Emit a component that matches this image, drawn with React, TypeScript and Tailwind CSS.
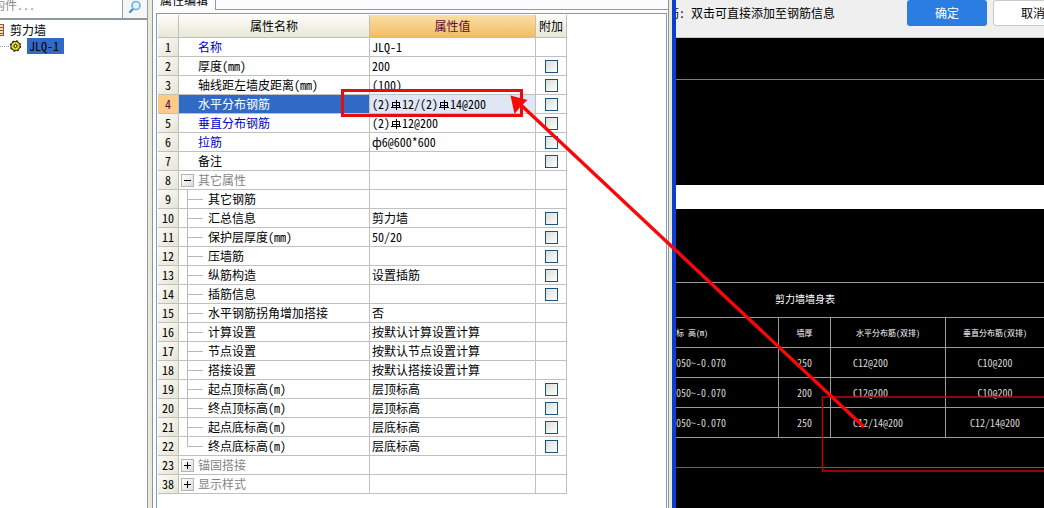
import { useState } from 'react';

type Row = {
  no: number;
  name: string;
  value?: string;
  kind?: 'group-open' | 'group-closed' | 'child' | 'last-child';
  link?: boolean;
  check?: boolean;
};

// '#' in a value stands for the grade III rebar symbol
const ROWS: Row[] = [
  { no: 1, name: '名称', value: 'JLQ-1', link: true },
  { no: 2, name: '厚度(mm)', value: '200', check: true },
  { no: 3, name: '轴线距左墙皮距离(mm)', value: '(100)', check: true },
  { no: 4, name: '水平分布钢筋', value: '(2)#12/(2)#14@200', link: true, check: true },
  { no: 5, name: '垂直分布钢筋', value: '(2)#12@200', link: true, check: true },
  { no: 6, name: '拉筋', value: 'ф6@600*600', link: true, check: true },
  { no: 7, name: '备注', check: true },
  { no: 8, name: '其它属性', kind: 'group-open' },
  { no: 9, name: '其它钢筋', kind: 'child' },
  { no: 10, name: '汇总信息', value: '剪力墙', kind: 'child', check: true },
  { no: 11, name: '保护层厚度(mm)', value: '50/20', kind: 'child', check: true },
  { no: 12, name: '压墙筋', kind: 'child', check: true },
  { no: 13, name: '纵筋构造', value: '设置插筋', kind: 'child', check: true },
  { no: 14, name: '插筋信息', kind: 'child', check: true },
  { no: 15, name: '水平钢筋拐角增加搭接', value: '否', kind: 'child' },
  { no: 16, name: '计算设置', value: '按默认计算设置计算', kind: 'child' },
  { no: 17, name: '节点设置', value: '按默认节点设置计算', kind: 'child' },
  { no: 18, name: '搭接设置', value: '按默认搭接设置计算', kind: 'child' },
  { no: 19, name: '起点顶标高(m)', value: '层顶标高', kind: 'child', check: true },
  { no: 20, name: '终点顶标高(m)', value: '层顶标高', kind: 'child', check: true },
  { no: 21, name: '起点底标高(m)', value: '层底标高', kind: 'child', check: true },
  { no: 22, name: '终点底标高(m)', value: '层底标高', kind: 'last-child', check: true },
  { no: 23, name: '锚固搭接', kind: 'group-closed' },
  { no: 38, name: '显示样式', kind: 'group-closed' },
];

const WALLS = [
  ['050~-0.070', '250', 'C12@200', 'C10@200'],
  ['050~-0.070', '200', 'C12@200', 'C10@200'],
  ['050~-0.070', '250', 'C12/14@200', 'C12/14@200'],
];

function RebarSymbol() {
  return (
    <svg viewBox="0 0 12 12" className="inline-block size-3 align-[-2px]" fill="none" stroke="#000" shapeRendering="crispEdges">
      <path d="M2.5 8.5v-5h7v5M2.500 6.500h7M1 8.500h10M6.500 1v10" />
    </svg>
  );
}

function Value({ text }: { text: string }) {
  const parts = text.split('#');
  return (
    <>
      {parts.map((part, i) => (
        <span key={i}>
          {i > 0 && <RebarSymbol />}
          {part}
        </span>
      ))}
    </>
  );
}

function NameCell({ row, selected }: { row: Row; selected: boolean }) {
  if (row.kind === 'group-open' || row.kind === 'group-closed') {
    return (
      <div className="flex h-[18px] items-center text-[#858585]">
        <button
          type="button"
          aria-label={row.name}
          className="mr-1 ml-0.5 flex size-[13px] items-center justify-center border border-[#b4b4b4] bg-linear-to-br from-white to-[#dcdcdc]"
        >
          <svg viewBox="0 0 9 9" className="size-[9px]" stroke="#000" shapeRendering="crispEdges">
            <path d={row.kind === 'group-open' ? 'M1 4.5h7' : 'M1 4.5h7M4.5 1v7'} />
          </svg>
        </button>
        {row.name}
      </div>
    );
  }
  if (row.kind) {
    return (
      <div className="flex h-[18px] items-center">
        {row.kind === 'last-child' ? (
          <span className="mr-[5px] ml-2 h-[10px] w-4 self-start border-b border-l border-[#b8b8b8]" />
        ) : (
          <span className="mr-[5px] ml-2 flex h-full w-4 items-center border-l border-[#b8b8b8]">
            <span className="h-px w-full bg-[#b8b8b8]" />
          </span>
        )}
        {row.name}
      </div>
    );
  }
  const color = selected ? 'bg-[#316ac5] text-white' : row.link ? 'text-[#0000c8]' : 'text-black';
  return <div className={`flex h-[18px] items-center pl-[19px] ${color}`}>{row.name}</div>;
}

function ComponentTree() {
  return (
    <aside className="w-[148px] shrink-0 overflow-hidden border-r border-[#8ba0b4] bg-white">
      <div className="flex h-5 border-b-2 border-[#8c98a4]">
        <input
          type="text"
          aria-label="构件"
          placeholder="构件..."
          className="min-w-0 flex-1 -indent-[7px] pb-2 text-xs text-black outline-none placeholder:text-[#8c8c8c]"
        />
        <button type="button" aria-label="搜索" className="flex w-[25px] items-start justify-center border-l border-[#8ba0b4] bg-[#f6f6f6]">
          <svg viewBox="0 0 14 14" className="size-3.5" fill="none">
            <path d="M5.5 8.5L2 12" stroke="#4d8fd0" strokeWidth="2.4" strokeLinecap="round" />
            <circle cx="8" cy="5.5" r="4" fill="#e4f3fd" stroke="#6cb2e8" strokeWidth="1.6" />
          </svg>
        </button>
      </div>
      <ul className="pt-0.5">
        <li className="flex h-4 items-center gap-[5px]">
          <svg viewBox="0 0 5 14" className="h-3.5 w-[5px]" shapeRendering="crispEdges">
            <path d="M0 1h4v12H0z" fill="#f3dcc0" />
            <path d="M3.5 1v12M0 1.5h4M0 4.5h4M0 7.5h4M0 10.5h4M0 12.5h4" stroke="#94592a" />
          </svg>
          剪力墙
        </li>
        <li className="flex h-4 items-center">
          <svg viewBox="0 0 22 12" className="mr-[5px] h-3 w-[22px]">
            <path d="M0 6.5h9" stroke="#999" strokeDasharray="1 1" />
            <circle cx="15.5" cy="6" r="4.9" stroke="#222" strokeWidth="1.6" strokeDasharray="2 1.85" />
            <circle cx="15.5" cy="6" r="4.3" fill="#f2ea2c" stroke="#4a460c" strokeWidth=".5" />
            <path d="M15.5 2v8M11.500 6h8M12.800 3.300l5.400 5.400M18.200 3.300l-5.400 5.400" stroke="#8a8412" strokeWidth=".6" />
            <circle cx="15.5" cy="6" r="1.5" fill="#fffb90" stroke="#111" strokeWidth=".9" />
          </svg>
          <span className="flex h-4 w-[37px] items-center bg-[#316ac5] pl-0.5">JLQ-1</span>
        </li>
      </ul>
    </aside>
  );
}

function PropertyEditor() {
  const [checked, setChecked] = useState<Record<number, boolean>>({});
  const selected = 4;

  return (
    <section className="flex w-[517px] shrink-0 flex-col border-x border-[#8796a8] bg-[#fcfcfe]">
      <div className="flex h-2.5 shrink-0">
        <div className="flex h-2.5 w-[63px] items-end overflow-hidden border-r border-[#919b9c] pb-1 pl-[7px]">
          <span className="leading-3">属性编辑</span>
        </div>
        <div className="flex-1 border-b border-[#919b9c]" />
      </div>
      <div className="mt-[3px] mr-px ml-[3px] flex-1 border border-b-0 border-[#7f9db9] bg-white p-px">
        <table className="table-fixed border-separate border-spacing-0">
          <colgroup>
            <col className="w-[21px]" />
            <col className="w-[191px]" />
            <col className="w-[166px]" />
            <col className="w-[31px]" />
          </colgroup>
          <thead>
            <tr className="h-[23px]">
              <th className="border-r border-b border-[#c0c0b8] bg-linear-to-b from-[#fdfdf9] to-[#e9e7d9] p-0" />
              <th className="border-r border-b border-[#c0c0b8] bg-linear-to-b from-[#fdfdf9] to-[#e9e7d9] p-0 font-normal">属性名称</th>
              <th className="border-r border-b border-[#c0c0b8] bg-linear-to-b from-[#fbdfa6] to-[#f1bd60] p-0 font-normal text-[#5c0a3a]">属性值</th>
              <th className="border-r border-b border-[#c0c0b8] bg-linear-to-b from-[#fdfdf9] to-[#e9e7d9] p-0 font-normal">附加</th>
            </tr>
          </thead>
          <tbody>
            {ROWS.map((row) => (
              <tr key={row.no} className="h-[19px]">
                <td
                  className={`border-r border-b border-[#c0c0c0] p-0 text-center ${
                    row.no === selected ? 'bg-[#fdcb86] text-[#5c0a3a]' : 'bg-linear-to-br from-[#fbfbf6] to-[#e6e5d6]'
                  }`}
                >
                  {row.no}
                </td>
                <td className="border-r border-b border-[#c0c0c0] p-0">
                  <NameCell row={row} selected={row.no === selected} />
                </td>
                <td className={`border-r border-b border-[#c0c0c0] p-0 pl-0.5 ${row.no === selected ? 'bg-[#dfe7f5]' : ''}`}>
                  {row.value && <Value text={row.value} />}
                </td>
                <td className="border-r border-b border-[#c0c0c0] p-0">
                  {row.check && (
                    <input
                      type="checkbox"
                      aria-label={row.name}
                      checked={!!checked[row.no]}
                      onChange={(e) => setChecked({ ...checked, [row.no]: e.target.checked })}
                      className="mx-auto block size-[13px] appearance-none border border-[#1c5180] bg-linear-to-br from-[#dcdcd7] to-white checked:bg-[#316ac5]"
                    />
                  )}
                </td>
              </tr>
            ))}
          </tbody>
        </table>
      </div>
    </section>
  );
}

function Drawing() {
  return (
    <section className="flex min-w-0 flex-1 flex-col overflow-hidden bg-black">
      <header className="flex h-[38px] shrink-0 items-start border-b border-[#c8c8c8] bg-[#efefef]">
        <div className="mr-[72px] flex h-[26px] w-[159px] shrink-0 items-center justify-end overflow-hidden whitespace-pre">
          筋: 双击可直接添加至钢筋信息
        </div>
        <button type="button" className="mr-1.5 h-[26px] w-20 shrink-0 rounded-[3px] bg-[#2b7de1] text-white">
          确定
        </button>
        <button type="button" className="h-[26px] w-20 shrink-0 rounded-[3px] border border-[#c8c8c8] bg-white">
          取消
        </button>
      </header>
      <div className="h-[147px] shrink-0">
        <div className="h-[42px] border-b border-[#2aa792]" />
      </div>
      <div className="h-6 shrink-0 bg-white" />
      <div className="h-[74px] shrink-0 border-b border-[#9a9a9a]" />
      <table className="w-full table-fixed border-separate border-spacing-0 text-[10px] text-[#d8d8d8]">
        <caption className="h-[34px] pl-[99px] text-left leading-8 text-white">剪力墙墙身表</caption>
        <colgroup>
          <col className="w-[103px]" />
          <col className="w-[52px]" />
          <col className="w-[115px]" />
          <col />
        </colgroup>
        <thead>
          <tr className="h-[31px] text-[8px] text-white">
            <th className="border-y border-r border-[#9a9a9a] p-0 text-left font-normal">标 高(m)</th>
            <th className="border-y border-r border-[#9a9a9a] p-0 font-normal">墙厚</th>
            <th className="border-y border-r border-[#9a9a9a] p-0 font-normal">水平分布筋(双排)</th>
            <th className="border-y border-[#9a9a9a] p-0 font-normal">垂直分布筋(双排)</th>
          </tr>
        </thead>
        <tbody>
          {WALLS.map(([level, thickness, horizontal, vertical], i) => (
            <tr key={i} className="h-[30px]">
              <td className="border-r border-b border-[#9a9a9a] p-0">{level}</td>
              <td className="border-r border-b border-[#9a9a9a] p-0 text-center">{thickness}</td>
              <td className="border-r border-b border-[#9a9a9a] p-0 pl-[22px]">{horizontal}</td>
              <td className="border-b border-[#9a9a9a] p-0 text-center">{vertical}</td>
            </tr>
          ))}
        </tbody>
      </table>
      <div className="h-[30px] shrink-0 border-b border-[#16857a]" />
    </section>
  );
}

// Red marks laid over both windows: value box, drawing box and the arrow between them
function Annotations() {
  return (
    <svg className="pointer-events-none absolute inset-0 size-full" fill="none">
      <rect x="342.5" y="90.5" width="179" height="25" stroke="#e80c0c" strokeWidth="3" />
      <rect x="822.5" y="397" width="400" height="74" stroke="#b40808" strokeWidth="1.6" />
      <path d="M864 427L521 105" stroke="#f80808" strokeWidth="3.4" />
      <path d="M510.500 95.500L527.500 100L521 106L514.500 114z" fill="#f80808" />
    </svg>
  );
}

export default function App() {
  return (
    <div className="relative flex min-h-screen w-full overflow-hidden bg-[#ece9d8] font-['Noto_Sans_Mono_CJK_SC','Noto_Sans_CJK_SC',sans-serif] text-xs leading-4 text-black">
      <ComponentTree />
      <div className="w-1 shrink-0" />
      <PropertyEditor />
      <div className="w-[7px] shrink-0 border-r-4 border-[#0a3fd0]" />
      <Drawing />
      <Annotations />
    </div>
  );
}
